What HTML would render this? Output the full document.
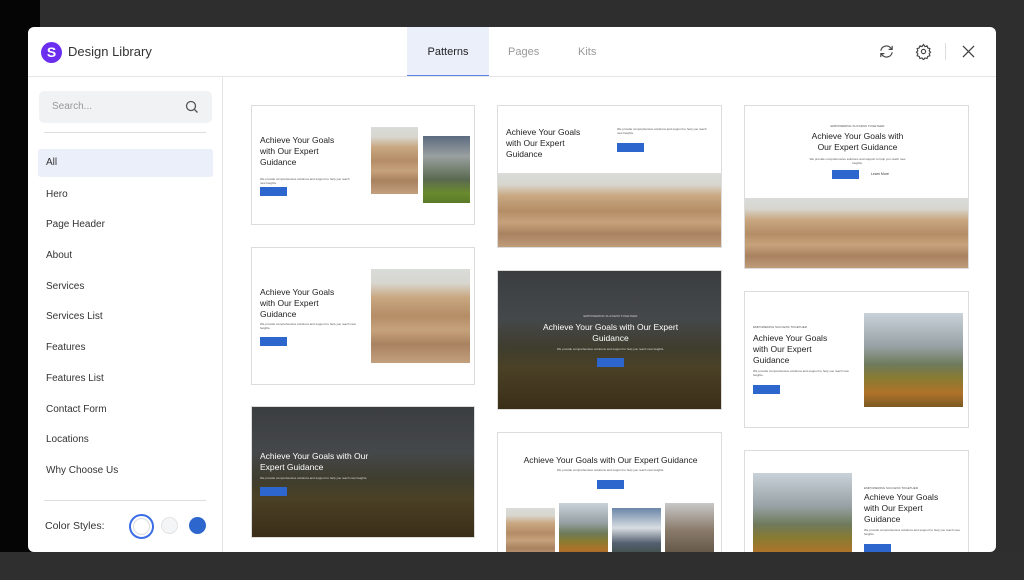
<!DOCTYPE html>
<html><head><meta charset="utf-8"><style>
*{box-sizing:border-box;margin:0;padding:0}
body{width:1024px;height:580px;overflow:hidden;background:#2e2e2e;font-family:"Liberation Sans",sans-serif;position:relative}
.a{position:absolute}
.modal{left:28px;top:27px;width:968px;height:525px;background:#fff;border-radius:6px;overflow:hidden}
.card{position:absolute;background:#fff;border:1px solid #dcdcdc;overflow:hidden}
.h{color:#222;font-size:8.5px;line-height:11px}
.p{font-size:3px;color:#555;line-height:4px}
.btn{position:absolute;background:#2d66cc;width:27px;height:9px}
.desert{background:linear-gradient(180deg,#d9dcd9 0%,#d8d6cf 15%,#c9a882 30%,#b48d66 50%,#c6a27c 65%,#a98260 80%,#c2a07e 100%)}
.dark{background:linear-gradient(180deg,#3b3e40 0%,#45484a 35%,#3f3d2f 55%,#4a4126 70%,#3b2e18 100%)}
.mtn{background:linear-gradient(180deg,#c9d2d8 0%,#98a2a6 35%,#6e7a5a 55%,#8a7b30 70%,#b0722a 85%,#7a5a22 100%)}
.nav div{height:30.7px;line-height:30px;padding-left:8px;font-size:10px;color:#333}
</style></head><body>
<div class="a" style="left:0;top:0;width:40px;height:580px;background:#050505"></div>
<div class="a" style="left:0;top:552px;width:1024px;height:28px;background:#2f2f2f"></div>
<div class="a modal">
 <div class="a" style="left:13px;top:15px;width:21px;height:21px;border-radius:50%;background:#6b2ef0;color:#fff;font-size:14px;font-weight:bold;text-align:center;line-height:21px">S</div>
 <div class="a" style="left:40px;top:17px;font-size:13px;color:#333">Design Library</div>
 <div class="a" style="left:379px;top:0;width:82px;height:50px;background:#ebeffa;border-bottom:2px solid #5b86e5;text-align:center;line-height:50px;font-size:11px;color:#222">Patterns</div>
 <div class="a" style="left:480px;top:19px;font-size:11px;color:#999">Pages</div>
 <div class="a" style="left:550px;top:19px;font-size:11px;color:#999">Kits</div>
 <svg class="a" style="left:850px;top:16px" width="17" height="17" viewBox="0 0 24 24" fill="none" stroke="#444" stroke-width="1.6"><path d="M4 11a8 8 0 0 1 14-4l2 2M20 13a8 8 0 0 1-14 4l-2-2M20 4v5h-5M4 20v-5h5"/></svg>
 <svg class="a" style="left:887px;top:16px" width="17" height="17" viewBox="0 0 24 24" fill="none" stroke="#444" stroke-width="1.6"><circle cx="12" cy="12" r="3"/><path d="M12 2l2 3 3-1 1 3 3 1-1 3 2 2-2 2 1 3-3 1-1 3-3-1-2 3-2-3-3 1-1-3-3-1 1-3-2-2 2-2-1-3 3-1 1-3 3 1z"/></svg>
 <div class="a" style="left:917px;top:16px;width:1px;height:17px;background:#ddd"></div>
 <svg class="a" style="left:934px;top:18px" width="13" height="13" viewBox="0 0 14 14" stroke="#444" stroke-width="1.4"><path d="M1 1l12 12M13 1L1 13"/></svg>
 <div class="a" style="left:0;top:49px;width:968px;height:1px;background:#e5e5e5"></div>
 <div class="a" style="left:194px;top:50px;width:1px;height:475px;background:#e5e5e5"></div>
 <div class="a" style="left:11px;top:64px;width:173px;height:32px;background:#f1f2f4;border-radius:5px"></div>
 <div class="a" style="left:24px;top:74px;font-size:10px;color:#999">Search...</div>
 <svg class="a" style="left:157px;top:73px" width="14" height="14" viewBox="0 0 14 14" fill="none" stroke="#555" stroke-width="1.3"><circle cx="6" cy="6" r="4.5"/><path d="M9.5 9.5l3 3"/></svg>
 <div class="a" style="left:16px;top:105px;width:162px;height:1px;background:#ddd"></div>
 <div class="a nav" style="left:10px;top:122px;width:175px">
  <div style="background:#ebeffa;border-radius:3px;height:28px;line-height:28px;margin-bottom:2.7px">All</div>
  <div>Hero</div><div>Page Header</div><div>About</div><div>Services</div><div>Services List</div><div>Features</div><div>Features List</div><div>Contact Form</div><div>Locations</div><div>Why Choose Us</div>
 </div>
 <div class="a" style="left:16px;top:473px;width:162px;height:1px;background:#ddd"></div>
 <div class="a" style="left:17px;top:493px;font-size:10.5px;color:#333">Color Styles:</div>
 <div class="a" style="left:101px;top:487px;width:25px;height:25px;border-radius:50%;border:2px solid #3b6ee6;background:#fff"><div style="margin:2px;width:17px;height:17px;border-radius:50%;border:1px solid #ddd"></div></div>
 <div class="a" style="left:133px;top:490px;width:17px;height:17px;border-radius:50%;background:#f4f5f7;border:1px solid #e3e3e3"></div>
 <div class="a" style="left:161px;top:490px;width:17px;height:17px;border-radius:50%;background:#2d66cc"></div>

<div class="a" style="left:-28px;top:-27px;width:1024px;height:580px">
<div class="card" style="left:251px;top:105px;width:224px;height:120px">
 <div class="a h" style="left:8px;top:29px">Achieve Your Goals<br>with Our Expert<br>Guidance</div>
 <div class="a p" style="left:8px;top:71px;width:95px">We provide comprehensive solutions and support to help you reach new heights.</div>
 <div class="btn" style="left:8px;top:81px"></div>
 <div class="a desert" style="left:119px;top:21px;width:47px;height:67px"></div>
 <div class="a" style="left:171px;top:30px;width:47px;height:67px;background:linear-gradient(180deg,#5c6b80 0%,#9aa0a0 30%,#5a6a50 65%,#6a8a2e 85%,#5b7a28 100%)"></div>
</div>
<div class="card" style="left:251px;top:247px;width:224px;height:138px">
 <div class="a h" style="left:8px;top:39px">Achieve Your Goals<br>with Our Expert<br>Guidance</div>
 <div class="a p" style="left:8px;top:74px;width:100px">We provide comprehensive solutions and support to help you reach new heights.</div>
 <div class="btn" style="left:8px;top:89px"></div>
 <div class="a desert" style="left:119px;top:21px;width:99px;height:94px"></div>
</div>
<div class="card dark" style="left:251px;top:406px;width:224px;height:132px">
 <div class="a h" style="left:8px;top:44px;color:#fff">Achieve Your Goals with Our<br>Expert Guidance</div>
 <div class="a p" style="left:8px;top:69px;color:#ddd;width:120px">We provide comprehensive solutions and support to help you reach new heights.</div>
 <div class="btn" style="left:8px;top:80px"></div>
</div>
<div class="card" style="left:497px;top:105px;width:225px;height:143px">
 <div class="a h" style="left:8px;top:21px">Achieve Your Goals<br>with Our Expert<br>Guidance</div>
 <div class="a p" style="left:119px;top:21px;width:95px">We provide comprehensive solutions and support to help you reach new heights.</div>
 <div class="btn" style="left:119px;top:37px"></div>
 <div class="a desert" style="left:0;top:67px;width:225px;height:76px"></div>
</div>
<div class="card dark" style="left:497px;top:270px;width:225px;height:140px">
 <div class="a p" style="left:0;top:43px;width:225px;text-align:center;color:#ccc">EMPOWERING SUCCESS TOGETHER</div>
 <div class="a h" style="left:0;top:51px;width:225px;text-align:center;color:#fff">Achieve Your Goals with Our Expert<br>Guidance</div>
 <div class="a p" style="left:0;top:76px;width:225px;text-align:center;color:#ddd">We provide comprehensive solutions and support to help you reach new heights.</div>
 <div class="btn" style="left:99px;top:87px"></div>
</div>
<div class="card" style="left:497px;top:432px;width:225px;height:130px">
 <div class="a h" style="left:0;top:22px;width:225px;text-align:center">Achieve Your Goals with Our Expert Guidance</div>
 <div class="a p" style="left:0;top:35px;width:225px;text-align:center">We provide comprehensive solutions and support to help you reach new heights.</div>
 <div class="btn" style="left:99px;top:47px"></div>
 <div class="a desert" style="left:8px;top:75px;width:49px;height:50px"></div>
 <div class="a mtn" style="left:61px;top:70px;width:49px;height:55px"></div>
 <div class="a" style="left:114px;top:75px;width:49px;height:50px;background:linear-gradient(180deg,#6a86a8,#d8dde2 40%,#556070 70%,#3a4a40)"></div>
 <div class="a" style="left:167px;top:70px;width:49px;height:55px;background:linear-gradient(180deg,#c8c8c8,#8a7a6a 50%,#5a5040)"></div>
</div>
<div class="card" style="left:744px;top:105px;width:225px;height:164px">
 <div class="a p" style="left:0;top:18px;width:225px;text-align:center">EMPOWERING SUCCESS TOGETHER</div>
 <div class="a h" style="left:0;top:25px;width:225px;text-align:center">Achieve Your Goals with<br>Our Expert Guidance</div>
 <div class="a p" style="left:60px;top:51px;width:105px;text-align:center">We provide comprehensive solutions and support to help you reach new heights.</div>
 <div class="btn" style="left:87px;top:64px"></div>
 <div class="a" style="left:126px;top:66px;font-size:3.5px;color:#333">Learn More</div>
 <div class="a desert" style="left:0;top:92px;width:225px;height:72px"></div>
</div>
<div class="card" style="left:744px;top:291px;width:225px;height:137px">
 <div class="a p" style="left:8px;top:33px">EMPOWERING SUCCESS TOGETHER</div>
 <div class="a h" style="left:8px;top:41px">Achieve Your Goals<br>with Our Expert<br>Guidance</div>
 <div class="a p" style="left:8px;top:77px;width:100px">We provide comprehensive solutions and support to help you reach new heights.</div>
 <div class="btn" style="left:8px;top:93px"></div>
 <div class="a mtn" style="left:119px;top:21px;width:99px;height:94px"></div>
</div>
<div class="card" style="left:744px;top:450px;width:225px;height:120px">
 <div class="a mtn" style="left:8px;top:22px;width:99px;height:94px"></div>
 <div class="a p" style="left:119px;top:35px">EMPOWERING SUCCESS TOGETHER</div>
 <div class="a h" style="left:119px;top:41px">Achieve Your Goals<br>with Our Expert<br>Guidance</div>
 <div class="a p" style="left:119px;top:77px;width:98px">We provide comprehensive solutions and support to help you reach new heights.</div>
 <div class="btn" style="left:119px;top:93px"></div>
</div>
</div>
</div>
</body></html>
